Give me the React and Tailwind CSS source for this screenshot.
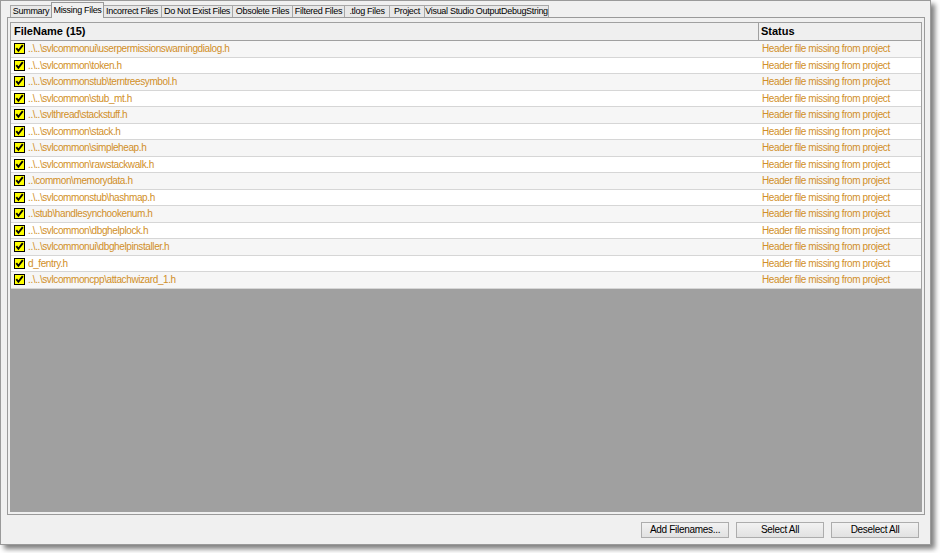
import React from 'react';

const tabs = [
  { label: 'Summary', w: 42 },
  { label: 'Missing Files', w: 53, active: true },
  { label: 'Incorrect Files', w: 59 },
  { label: 'Do Not Exist Files', w: 71 },
  { label: 'Obsolete Files', w: 60 },
  { label: 'Filtered Files', w: 52 },
  { label: '.tlog Files', w: 45 },
  { label: 'Project', w: 35 },
  { label: 'Visual Studio OutputDebugString', w: 124 },
];

const files = [
  '..\\..\\svlcommonui\\userpermissionswarningdialog.h',
  '..\\..\\svlcommon\\token.h',
  '..\\..\\svlcommonstub\\terntreesymbol.h',
  '..\\..\\svlcommon\\stub_mt.h',
  '..\\..\\svlthread\\stackstuff.h',
  '..\\..\\svlcommon\\stack.h',
  '..\\..\\svlcommon\\simpleheap.h',
  '..\\..\\svlcommon\\rawstackwalk.h',
  '..\\common\\memorydata.h',
  '..\\..\\svlcommonstub\\hashmap.h',
  '..\\stub\\handlesynchookenum.h',
  '..\\..\\svlcommon\\dbghelplock.h',
  '..\\..\\svlcommonui\\dbghelpinstaller.h',
  'd_fentry.h',
  '..\\..\\svlcommoncpp\\attachwizard_1.h',
];

const Check = () => (
  <svg width="11" height="11" viewBox="0 0 11 11" className="shrink-0">
    <rect x="0.5" y="0.5" width="10" height="10" fill="#ffff00" stroke="#000" />
    <path d="M2.3 5.2 L4.4 7.8 L8.8 2.2" fill="none" stroke="#000" strokeWidth="1.9" />
  </svg>
);

const Btn = ({ children }) => (
  <button className="w-[88px] h-[16px] border border-[#adadad] bg-gradient-to-b from-[#f2f2f2] to-[#e2e2e2] text-[10px] tracking-[-0.3px] text-black leading-none">
    {children}
  </button>
);

export default function App() {
  return (
    <div className="w-[940px] h-[553px] bg-white overflow-hidden" style={{ fontFamily: '"Liberation Sans", Arial, sans-serif' }}>
      <div className="w-[931px] h-[545px] bg-[#f0f0f0] border border-[#9a9a9a] shadow-[4px_4px_5px_rgba(0,0,0,0.5)] flex flex-col">
        {/* tab strip */}
        <div className="h-[16px] flex items-end pl-[9px]">
          {tabs.map((t) =>
            t.active ? (
              <div
                key={t.label}
                style={{ width: t.w }}
                className="relative z-10 h-[16px] -mb-px -mx-[1px] bg-[#f0f0f0] border border-b-0 border-[#9a9a9a] flex items-center justify-center text-[9px] tracking-[-0.3px] text-black whitespace-nowrap"
              >
                {t.label}
              </div>
            ) : (
              <div
                key={t.label}
                style={{ width: t.w }}
                className="h-[12px] bg-[#e8e8e8] border border-b-0 border-l-0 first:border-l border-[#a8a8a8] flex items-center justify-center text-[9px] tracking-[-0.3px] text-black whitespace-nowrap"
              >
                {t.label}
              </div>
            )
          )}
        </div>

        {/* panel */}
        <div className="ml-[6px] w-[918px] h-[498px] border border-[#9a9a9a] bg-[#f0f0f0] flex flex-col pt-[4px] pl-[2px] pr-[2px] pb-[2px]">
          <div className="flex-1 flex flex-col border border-[#a0a0a0] bg-[#a0a0a0]">
            {/* header */}
            <div className="h-[18px] flex bg-[#efefef] border-b border-[#a0a0a0] text-[11px] font-bold text-black">
              <div className="w-[748px] border-r border-[#a0a0a0] pl-[3px] flex items-center">FileName (15)</div>
              <div className="flex-1 pl-[2px] flex items-center">Status</div>
            </div>
            {files.map((f, i) => (
              <div
                key={i}
                className={`h-[16.5px] flex items-center border-b border-[#d6d6d6] text-[10px] tracking-[-0.4px] text-[#d18f28] ${i % 2 === 0 ? 'bg-[#f6f6f6]' : 'bg-white'}`}
              >
                <div className="w-[748px] pl-[3px] flex items-center gap-[3px] whitespace-nowrap">
                  <Check />
                  <span>{f}</span>
                </div>
                <div className="flex-1 pl-[3px] whitespace-nowrap">Header file missing from project</div>
              </div>
            ))}
          </div>
        </div>

        {/* buttons */}
        <div className="flex justify-end gap-[7px] pt-[7px] pr-[11px]">
          <Btn>Add Filenames...</Btn>
          <Btn>Select All</Btn>
          <Btn>Deselect All</Btn>
        </div>
      </div>
    </div>
  );
}
